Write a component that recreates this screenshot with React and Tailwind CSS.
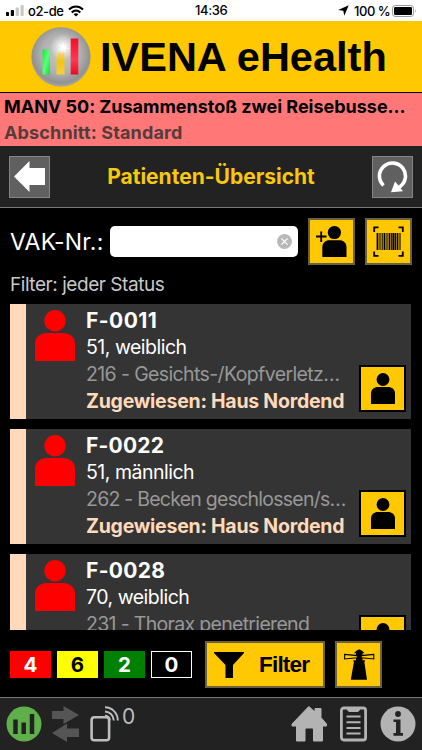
import React from 'react';

const patients = [
  { id: 'F-0011', idTrack: 'tracking-[0.45px]', info: '51, weiblich', diagnosis: '216 - Gesichts-/Kopfverletz…', track: 'tracking-[-0.62px]', assigned: 'Zugewiesen: Haus Nordend' },
  { id: 'F-0022', idTrack: 'tracking-[0.2px]', info: '51, männlich', diagnosis: '262 - Becken geschlossen/s…', track: 'tracking-[-0.76px]', assigned: 'Zugewiesen: Haus Nordend' },
  { id: 'F-0028', idTrack: 'tracking-[0.3px]', info: '70, weiblich', diagnosis: '231 - Thorax penetrierend', track: 'tracking-[-0.68px]' },
];

const counters = [
  { value: 4, className: 'bg-[#ff0000] border-[#ff0000] text-white' },
  { value: 6, className: 'bg-[#ffff00] border-[#ffff00] text-black' },
  { value: 2, className: 'bg-[#008000] border-[#008000] text-white' },
  { value: 0, className: 'bg-black border-white text-white' },
];

function Person({ className }) {
  return (
    <svg viewBox="0 0 40 51" preserveAspectRatio="none" className={className} fill="currentColor">
      <circle cx="20" cy="10.7" r="10.7" />
      <path d="M0 51V34C0 27 5 23 12 23H28C35 23 40 27 40 34V51Z" />
    </svg>
  );
}

function Logo() {
  return (
    <svg viewBox="0 0 60 60" className="w-[60px] h-[60px] shrink-0">
      <defs>
        <radialGradient id="ball" cx="0.5" cy="0.45" r="0.55">
          <stop offset="0" stopColor="#c9c9c9" />
          <stop offset="0.6" stopColor="#b0b0b0" />
          <stop offset="0.88" stopColor="#929292" />
          <stop offset="1" stopColor="#a9a9a0" />
        </radialGradient>
        <radialGradient id="shine">
          <stop offset="0" stopColor="#fff" />
          <stop offset="0.25" stopColor="#fff" stopOpacity="0.75" />
          <stop offset="1" stopColor="#fff" stopOpacity="0" />
        </radialGradient>
        <linearGradient id="green" x1="0" y1="0" x2="1" y2="1">
          <stop offset="0" stopColor="#19e83c" />
          <stop offset="0.5" stopColor="#5cff7b" />
          <stop offset="1" stopColor="#14dc35" />
        </linearGradient>
        <linearGradient id="gold" x1="0" y1="0" x2="0" y2="1">
          <stop offset="0" stopColor="#f5d878" />
          <stop offset="0.4" stopColor="#f2c511" />
          <stop offset="1" stopColor="#f8cf3d" />
        </linearGradient>
        <linearGradient id="red" x1="0" y1="0" x2="0" y2="1">
          <stop offset="0" stopColor="#fb0a25" />
          <stop offset="0.6" stopColor="#ff3a52" />
          <stop offset="1" stopColor="#f00822" />
        </linearGradient>
      </defs>
      <circle cx="30" cy="30" r="29.7" fill="url(#ball)" />
      <circle cx="32" cy="20" r="13" fill="url(#shine)" />
      <rect x="11.5" y="22.5" width="7.5" height="25" fill="url(#green)" />
      <rect x="25.5" y="25.5" width="8" height="22" fill="url(#gold)" />
      <rect x="39.7" y="11.5" width="7.6" height="36" fill="url(#red)" />
      <path d="M32 14L33 18.5L37 16.5L34 20L39 21.5L34 22.2L35 26L32.3 23L30.5 27.5L30.8 22.7L26 23L30 20.5L27 17L31 18.7Z" fill="#fff" opacity="0.7" />
    </svg>
  );
}

function StatusBar() {
  return (
    <div className="h-[21px] bg-white text-black flex items-center justify-between pl-[6px] pr-[5px] text-[13px] leading-[20px] font-medium relative">
      <div className="flex items-center">
        <svg viewBox="0 0 18 12" className="w-[18px] h-[12px]">
          <rect x="0" y="7" width="3" height="4" rx="0.8" />
          <rect x="4.8" y="5" width="3.2" height="6" rx="0.8" />
          <rect x="9.7" y="2.6" width="3.2" height="8.4" rx="0.8" fill="#c8c8c8" />
          <rect x="14.5" y="0" width="3.2" height="11" rx="0.8" fill="#c8c8c8" />
        </svg>
        <span className="ml-[4px] w-[36px] whitespace-nowrap tracking-[-0.4px]">o2-de</span>
        <svg viewBox="0 0 16 12" className="ml-[4px] w-[16px] h-[12px]" fill="none" stroke="#000" strokeWidth="2.1">
          <path d="M1 4.6C5 0.5 11 0.5 15 4.6" />
          <path d="M3.7 7.4C6.2 5 9.8 5 12.3 7.4" />
          <path d="M8 11.6L5.6 9.2C7 7.9 9 7.9 10.4 9.2Z" fill="#000" stroke="none" />
        </svg>
      </div>
      <span className="absolute left-[195px] top-0 tracking-[-0.35px]">14:36</span>
      <div className="flex items-center">
        <svg viewBox="0 0 11 11" className="w-[11px] h-[11px] mr-[5px]">
          <path d="M10.7 0.2L6.3 10.7L5.3 5.8L0.2 5.1Z" />
        </svg>
        <span className="w-[36px] whitespace-nowrap tracking-[-0.45px]">100 %</span>
        <svg viewBox="0 0 25 12" className="ml-[2px] w-[25px] h-[12px]">
          <rect x="0.5" y="0.5" width="21" height="11" rx="2.8" fill="none" stroke="#999" />
          <rect x="2" y="2" width="18" height="8" rx="1.2" />
          <path d="M23 4Q24.5 6 23 8Z" fill="#999" />
        </svg>
      </div>
    </div>
  );
}

function PatientCard({ patient }) {
  return (
    <div className="h-[115px] shrink-0 flex bg-[#343434] border-l-[16px] border-[#ffd9b9]">
      <Person className="w-[40px] h-[51px] mt-[6px] ml-[9px] text-[#ff0000] shrink-0" />
      <div className="ml-[11px] w-[264px] pt-[3px] text-[19.5px] leading-[27px] whitespace-nowrap">
        <div className={`text-[21px] font-bold text-white ${patient.idTrack}`}>{patient.id}</div>
        <div className="text-white tracking-[-0.5px]">{patient.info}</div>
        <div className={`text-[#989898] ${patient.track}`}>{patient.diagnosis}</div>
        {patient.assigned && <div className="font-bold text-[#ffd9b9] tracking-[-0.25px]">{patient.assigned}</div>}
      </div>
      <div className="self-end ml-[9px] mb-[7px] w-[47px] h-[47px] bg-[#ffc800] border-2 border-black flex items-center justify-center">
        <Person className="w-[24px] h-[31px] text-black" />
      </div>
    </div>
  );
}

export default function App() {
  return (
    <div className="w-[422px] h-[750px] flex flex-col overflow-hidden bg-black font-[Inter,'Liberation_Sans',sans-serif]">
      <StatusBar />

      {/* Brand */}
      <div className="h-[71px] bg-[#ffc800] flex items-center pl-[31px]">
        <Logo />
        <h1 className="ml-[9px] text-[41.5px] leading-[50px] font-bold text-black whitespace-nowrap font-['Liberation_Sans',sans-serif]">IVENA eHealth</h1>
      </div>

      {/* Incident */}
      <div className="h-[54px] bg-[#ff7777] border-t border-black pl-[4px] pt-px text-[18px] leading-[26px] font-bold whitespace-nowrap">
        <div className="text-black tracking-[-0.02px]">MANV 50: Zusammenstoß zwei Reisebusse…</div>
        <div className="text-[#553c3c] tracking-[0.15px]">Abschnitt: Standard</div>
      </div>

      {/* Title bar */}
      <div className="h-[62px] bg-[#222] border-b border-[#777] flex items-center justify-between pl-[9px] pr-[9px]">
        <div className="w-[41px] h-[42px] bg-[#606060] border border-[#858585] flex items-center justify-center">
          <svg viewBox="0 0 31 31" className="w-[31px] h-[31px]" fill="#fff">
            <path d="M0 15.5L15.5 0V7H31V24H15.5V31Z" />
          </svg>
        </div>
        <h2 className="text-[21px] leading-[28px] font-bold text-[#f8c80f] whitespace-nowrap">Patienten-Übersicht</h2>
        <div className="w-[41px] h-[42px] bg-[#606060] border border-[#858585] flex items-center justify-center">
          <svg viewBox="0 0 31 32" className="w-[31px] h-[32px]">
            <path d="M6.5 24.5A13 13 0 1 1 22.5 26" fill="none" stroke="#fff" strokeWidth="3.6" />
            <path d="M14 31.2L18 20.5L21.5 24.5L26 30.2Z" fill="#fff" />
          </svg>
        </div>
      </div>

      {/* Search */}
      <div className="h-[56px] mt-[10px] pl-[10px] pr-[10px] flex items-start">
        <label className="w-[100px] pt-[8px] text-[23px] leading-[32px] text-white whitespace-nowrap tracking-[0.25px]">VAK-Nr.:</label>
        <div className="mt-[8px] w-[188px] h-[31px] bg-white rounded-[5px] flex items-center justify-end pr-[6px]">
          <svg viewBox="0 0 15 15" className="w-[15px] h-[15px]">
            <circle cx="7.5" cy="7.5" r="7.4" fill="#b8b8b8" />
            <path d="M4.4 4.4L10.6 10.6M10.6 4.4L4.4 10.6" stroke="#fff" strokeWidth="1.3" />
          </svg>
        </div>
        <div className="ml-[10px] w-[47px] h-[47px] bg-[#ffc800] border-2 border-[#6b6040] flex">
          <svg viewBox="0 0 43 43" className="w-[43px] h-[43px]">
            <path d="M6 16.5H16.5M11.2 11.5V22" stroke="#000" strokeWidth="1.8" />
            <circle cx="24.4" cy="12.5" r="6.6" />
            <path d="M12.3 37V27.5C12.3 23 15.5 20.3 19.5 20.3H29.3C33.5 20.3 36.5 23 36.5 27.5V37Z" />
          </svg>
        </div>
        <div className="ml-[10px] w-[47px] h-[47px] bg-[#ffc800] border-2 border-[#6b6040] flex">
          <svg viewBox="0 0 43 43" className="w-[43px] h-[43px]" stroke="#000" fill="none">
            <path d="M11.5 7.4H7.2V12M31.5 7.4H35.8V12M11.5 35.8H7.2V31.5M31.5 35.8H35.8V31.5" strokeWidth="1.8" />
            <path d="M10.5 13V30M17.5 13V30M22.5 13V30M30.5 13V30" strokeWidth="1.8" />
            <path d="M13 13V30M15.2 13V30M20 13V30M24.7 13V30M28.4 13V30M33 13V30" strokeWidth="1.1" />
            <path d="M26.5 13V30" strokeWidth="2" />
          </svg>
        </div>
      </div>
      <div className="h-[30px] pl-[10px] text-[19px] leading-[22px] text-[#c8c8c8] whitespace-nowrap tracking-[-0.45px]">Filter: jeder Status</div>

      {/* Patient list */}
      <div className="h-[326px] ml-[10px] mr-[11px] flex flex-col gap-[10px] overflow-hidden">
        {patients.map((p) => (
          <PatientCard key={p.id} patient={p} />
        ))}
      </div>

      {/* Counters and filter */}
      <div className="h-[67px] pt-[11px] pl-[10px] flex items-start">
        <div className="mt-[10px] flex gap-[6px]">
          {counters.map((c) => (
            <div key={c.value} className={`w-[41px] h-[27px] border text-[20.5px] leading-[26px] font-bold text-center ${c.className}`}>{c.value}</div>
          ))}
        </div>
        <div className="ml-[13px] w-[120px] h-[47px] bg-[#ffc800] border-2 border-[#6b6040] flex items-center">
          <svg viewBox="0 0 30 26" className="ml-[7px] w-[30px] h-[26px]">
            <path d="M0 0H30V1L19 13V26H11.5V13L0 1Z" />
          </svg>
          <span className="ml-[15px] text-[22.5px] leading-[40px] font-bold text-black tracking-[-0.8px] font-['Liberation_Sans',sans-serif]">Filter</span>
        </div>
        <div className="ml-[10px] w-[47px] h-[47px] bg-[#ffc800] border-2 border-[#6b6040] flex">
          <svg viewBox="0 0 43 43" className="w-[43px] h-[43px]">
            <path d="M17 10.3Q19 7.5 22.2 6.3Q25.5 7.5 27.5 10.3Z" />
            <path d="M19 10H25.5V18H19Z" />
            <path d="M7.6 11.4L20.3 12.6V14.8L7.6 16ZM36.8 11.4L24.2 12.6V14.8L36.8 16Z" fill="#ffc800" stroke="#000" strokeWidth="1.1" />
            <path d="M16.3 17.2H28V18.6H27.3L30 36.7H13.8L17 18.6H16.3Z" />
          </svg>
        </div>
      </div>

      {/* Footer */}
      <div className="h-[53px] bg-[#222] border-t border-[#777] flex items-start pt-[8px] pl-[6px]">
        <svg viewBox="0 0 36 36" className="w-[36px] h-[36px]">
          <circle cx="18" cy="18" r="17.5" fill="#5fb04b" />
          <path d="M9.5 13.5V28M17.7 16.5V28M26 8V28" stroke="#222" strokeWidth="4.5" />
        </svg>
        <svg viewBox="0 0 27 36" className="ml-[10px] w-[27px] h-[36px]" fill="#555">
          <path d="M0 5H11.5V0L27 9L11.5 18V13H0Z" />
          <path d="M27 22.5H15V17.5L0 27L15 36V31H27Z" />
        </svg>
        <svg viewBox="0 0 30 36" className="ml-[11px] w-[30px] h-[36px]" fill="none" stroke="#bdbdbd">
          <rect x="1.6" y="11.2" width="17.5" height="23" rx="2.8" strokeWidth="2.6" />
          <path d="M15 1.3C22 1.3 27.8 7 27.8 14.5M15 5.5C20 6 23.3 9.2 23.8 14.5M15 9.5C18 10 19.5 11.5 20 14.5" strokeWidth="1.9" />
        </svg>
        <span className="ml-[2px] mt-px w-[20px] text-[21px] leading-[20px] text-[#bdbdbd]">0</span>
        <svg viewBox="0 0 36 36" className="ml-[149px] w-[36px] h-[36px]" fill="#b3b3b3">
          <path d="M17.8 0.5L24 6V2.5H30V11.5L35.5 18V20H31.5V35H22.5V24C22.5 22.5 22 22 20.5 22H16C14.5 22 14 22.5 14 24V35H5.5V20H1V18Z" stroke="#b3b3b3" strokeLinejoin="round" />
        </svg>
        <svg viewBox="0 0 27 36" className="ml-[13px] w-[27px] h-[36px]" fill="none" stroke="#b3b3b3">
          <rect x="1.4" y="2" width="24.2" height="32" rx="2.5" strokeWidth="2.8" />
          <path d="M7 2H20V4L18 6H9L7 4Z" fill="#b3b3b3" stroke="none" />
          <path d="M6.5 10.5H20.5M6.5 16.2H20.5M6.5 22H20.5M6.5 27.5H20.5" strokeWidth="2" />
        </svg>
        <svg viewBox="0 0 36 36" className="ml-[13px] w-[36px] h-[36px]">
          <circle cx="18" cy="18" r="17.5" fill="#b3b3b3" />
          <circle cx="18" cy="8" r="2.9" fill="#222" />
          <path d="M13.5 13.5H20.5V27H23V29.7H13.5V27H16V16H13.5Z" fill="#222" />
        </svg>
      </div>
    </div>
  );
}
